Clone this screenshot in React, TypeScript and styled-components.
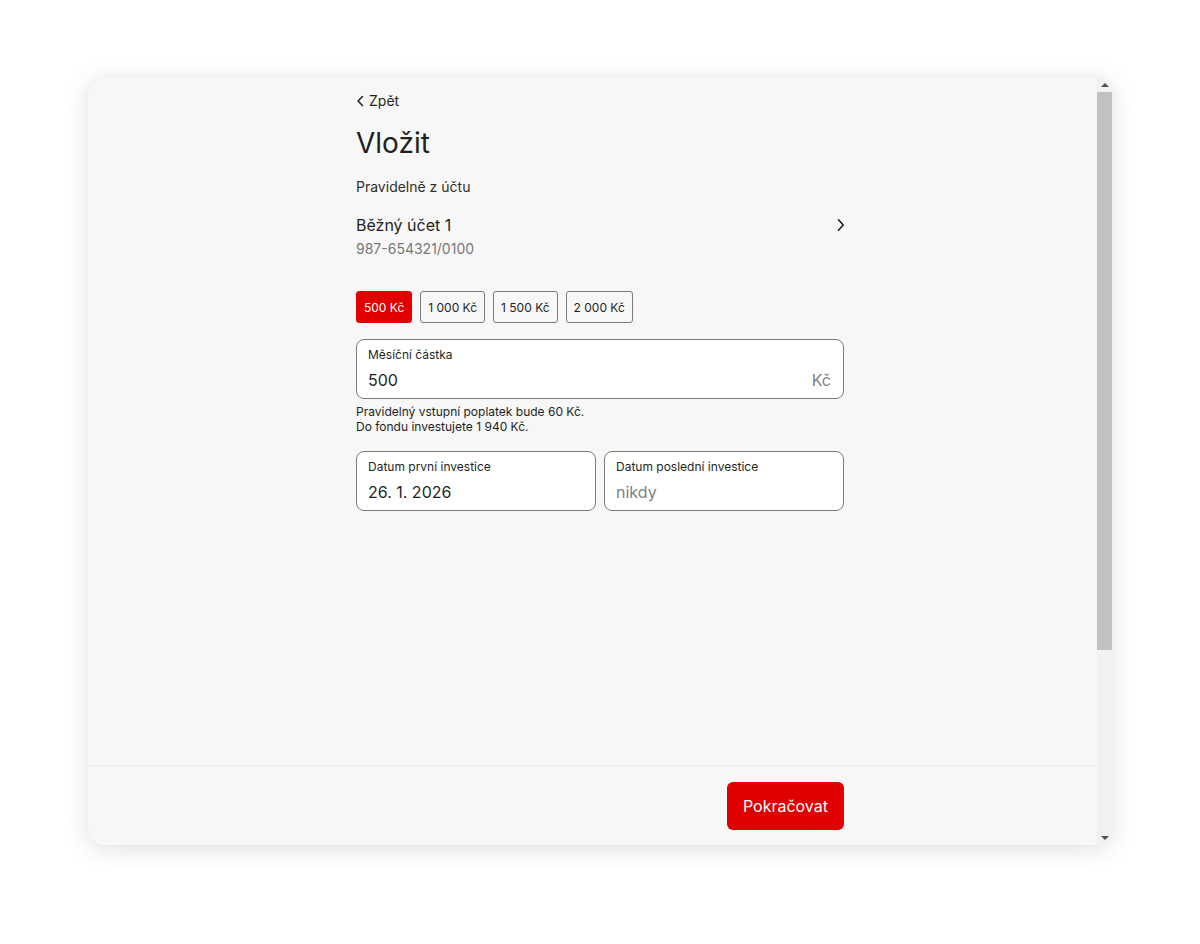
import React from "react";
import styled, { createGlobalStyle } from "styled-components";

const GlobalStyle = createGlobalStyle`
  html, body {
    margin: 0;
    padding: 0;
    background: #ffffff;
    font-family: Inter, "Noto Sans", "Liberation Sans", sans-serif;
    color: #1f1f1f;
  }
  * {
    box-sizing: border-box;
  }
`;

const Page = styled.div`
  padding-top: 77px;
  height: 944px;
`;

const Window = styled.div`
  width: 1024px;
  height: 768px;
  margin: 0 auto;
  border-radius: 16px;
  background: #f7f7f7;
  box-shadow: 0 4px 24px rgba(0, 0, 0, 0.12), 0 0 2px rgba(0, 0, 0, 0.06);
  overflow: hidden;
  display: flex;
`;

const Viewport = styled.div`
  flex: 1;
  display: flex;
  flex-direction: column;
`;

// the column is centred on the whole window, scrollbar included
const Main = styled.div`
  flex: 1;
  padding: 14px 0 0 15px;
`;

const ScrollBar = styled.div`
  width: 15px;
  flex: none;
  display: flex;
  flex-direction: column;
  background: #f1f1f1;
`;

const ScrollArrow = styled.div<{ $down?: boolean }>`
  height: 15px;
  display: flex;
  align-items: center;
  justify-content: center;
  &::before {
    content: "";
    width: 0;
    height: 0;
    border-left: 4px solid transparent;
    border-right: 4px solid transparent;
    ${(p) =>
      p.$down ? "border-top: 4px solid #505050;" : "border-bottom: 4px solid #505050;"}
  }
`;

const ScrollTrack = styled.div`
  flex: 1;
`;

const ScrollThumb = styled.div`
  height: 558px;
  background: #c1c1c1;
`;

const Column = styled.div`
  width: 488px;
  margin: 0 auto;
  display: flex;
  flex-direction: column;
`;

const BackLink = styled.button`
  all: unset;
  display: flex;
  align-items: center;
  gap: 1px;
  font-size: 14px;
  line-height: 20px;
  color: #1f1f1f;
  cursor: pointer;
  align-self: flex-start;
`;

const Title = styled.h1`
  margin: 14px 0 0;
  font-size: 28px;
  line-height: 36px;
  font-weight: 400;
  color: #1f1f1f;
`;

const Caption = styled.div`
  margin-top: 16px;
  font-size: 14px;
  line-height: 20px;
  color: #2f2f2f;
`;

const AccountRow = styled.div`
  margin-top: 16px;
  display: flex;
  align-items: flex-start;
  justify-content: space-between;
`;

const AccountName = styled.div`
  font-size: 16px;
  line-height: 24px;
  font-weight: 400;
`;

const AccountNumber = styled.div`
  margin-top: 2px;
  font-size: 14px;
  line-height: 20px;
  color: #777777;
`;

const Chips = styled.div`
  margin-top: 32px;
  display: flex;
  gap: 8px;
`;

const Chip = styled.button<{ $active?: boolean }>`
  height: 32px;
  padding: 0 7px;
  border-radius: 3px;
  font-family: inherit;
  font-size: 12px;
  border: 1px solid ${(p) => (p.$active ? "#e00000" : "#7a7a7a")};
  background: ${(p) => (p.$active ? "#e00000" : "transparent")};
  color: ${(p) => (p.$active ? "#ffffff" : "#1f1f1f")};
`;

const Field = styled.div`
  height: 60px;
  border: 1px solid #7a7a7a;
  border-radius: 8px;
  background: #ffffff;
  padding: 7px 12px 0 11px;
  display: flex;
  flex-direction: column;
`;

const AmountField = styled(Field)`
  margin-top: 16px;
`;

const FieldLabel = styled.div`
  font-size: 12px;
  line-height: 16px;
  color: #1f1f1f;
`;

const FieldRow = styled.div`
  margin-top: 5px;
  display: flex;
  align-items: center;
  justify-content: space-between;
`;

const FieldValue = styled.div<{ $muted?: boolean }>`
  font-size: 16px;
  line-height: 24px;
  color: ${(p) => (p.$muted ? "#808080" : "#1f1f1f")};
`;

const Suffix = styled.div`
  font-size: 16px;
  line-height: 24px;
  color: #808080;
`;

const Hint = styled.div`
  margin-top: 5px;
  font-size: 12px;
  line-height: 15px;
  color: #1f1f1f;
`;

const DateGrid = styled.div`
  margin-top: 17px;
  display: grid;
  grid-template-columns: 1fr 1fr;
  gap: 8px;
`;

const Footer = styled.div`
  flex: none;
  height: 80px;
  padding-left: 15px;
  border-top: 1px solid #ececec;
  background: #f7f7f7;
  display: flex;
  align-items: center;
`;

const FooterColumn = styled(Column)`
  flex-direction: row;
  justify-content: flex-end;
`;

const PrimaryButton = styled.button`
  height: 48px;
  padding: 0 16px;
  border: none;
  border-radius: 6px;
  background: #e00000;
  color: #ffffff;
  font-family: inherit;
  font-size: 16px;
`;

const ChevronLeft = () => (
  <svg width="12" height="16" viewBox="0 0 12 16" fill="none">
    <path d="M6.5 3.5 L2 8 L6.5 12.5" stroke="#1f1f1f" strokeWidth="1.5" strokeLinecap="round" strokeLinejoin="round" />
  </svg>
);

const ChevronRight = () => (
  <svg width="16" height="24" viewBox="0 0 16 24" fill="none">
    <path d="M10.5 6.8 L15.2 12 L10.5 17.2" stroke="#1f1f1f" strokeWidth="1.6" strokeLinecap="round" strokeLinejoin="round" />
  </svg>
);

const amounts = ["500 Kč", "1 000 Kč", "1 500 Kč", "2 000 Kč"];

export default function App() {
  return (
    <Page>
      <GlobalStyle />
      <Window>
        <Viewport>
          <Main>
            <Column>
              <BackLink>
                <ChevronLeft />
                Zpět
              </BackLink>
              <Title>Vložit</Title>
              <Caption>Pravidelně z účtu</Caption>
              <AccountRow>
                <div>
                  <AccountName>Běžný účet 1</AccountName>
                  <AccountNumber>987-654321/0100</AccountNumber>
                </div>
                <ChevronRight />
              </AccountRow>
              <Chips>
                {amounts.map((a, i) => (
                  <Chip key={a} $active={i === 0}>
                    {a}
                  </Chip>
                ))}
              </Chips>
              <AmountField>
                <FieldLabel>Měsíční částka</FieldLabel>
                <FieldRow>
                  <FieldValue>500</FieldValue>
                  <Suffix>Kč</Suffix>
                </FieldRow>
              </AmountField>
              <Hint>
                Pravidelný vstupní poplatek bude 60 Kč.
                <br />
                Do fondu investujete 1 940 Kč.
              </Hint>
              <DateGrid>
                <Field>
                  <FieldLabel>Datum první investice</FieldLabel>
                  <FieldRow>
                    <FieldValue>26. 1. 2026</FieldValue>
                  </FieldRow>
                </Field>
                <Field>
                  <FieldLabel>Datum poslední investice</FieldLabel>
                  <FieldRow>
                    <FieldValue $muted>nikdy</FieldValue>
                  </FieldRow>
                </Field>
              </DateGrid>
            </Column>
          </Main>
          <Footer>
            <FooterColumn>
              <PrimaryButton>Pokračovat</PrimaryButton>
            </FooterColumn>
          </Footer>
        </Viewport>
        <ScrollBar>
          <ScrollArrow />
          <ScrollTrack>
            <ScrollThumb />
          </ScrollTrack>
          <ScrollArrow $down />
        </ScrollBar>
      </Window>
    </Page>
  );
}
